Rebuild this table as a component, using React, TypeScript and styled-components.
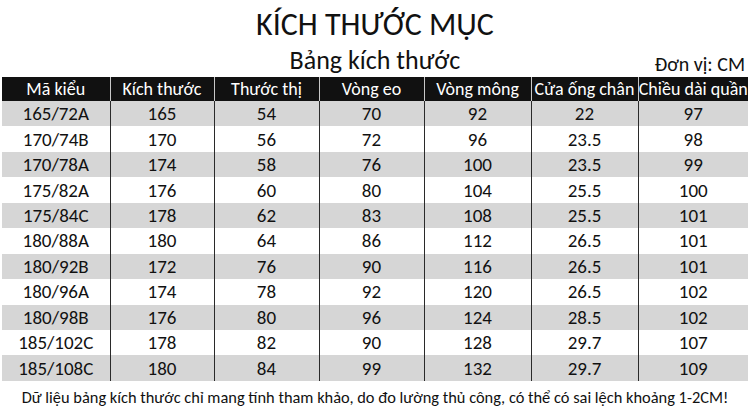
import React from 'react';
import styled, { createGlobalStyle } from 'styled-components';

const GlobalStyle = createGlobalStyle`
  html, body {
    margin: 0;
    padding: 0;
    background: #ffffff;
  }
  body {
    font-family: Carlito, "Open Sans", "Liberation Sans", sans-serif;
    color: #111111;
  }
`;

const Page = styled.div`
  width: 750px;
  height: 409px;
  overflow: hidden;
  display: flex;
  flex-direction: column;
`;

const Title = styled.h1`
  margin: 5px 0 0 0;
  font-size: 32px;
  line-height: 40px;
  font-weight: 400;
  text-align: center;
`;

const SubRow = styled.div`
  display: grid;
  grid-template-columns: 1fr auto 1fr;
  height: 30px;
  margin-bottom: 2px;
`;

const Subtitle = styled.h2`
  grid-column: 2;
  margin: 0;
  font-size: 26px;
  line-height: 30px;
  font-weight: 400;
`;

const Unit = styled.span`
  grid-column: 3;
  justify-self: end;
  align-self: end;
  margin-bottom: 1px;
  padding-right: 5px;
  font-size: 20px;
  line-height: 20px;
`;

const Table = styled.table`
  margin: 0 2px;
  width: 746px;
  border-collapse: collapse;
  table-layout: fixed;
`;

const HeadCell = styled.th`
  height: 24px;
  padding: 0;
  background: #111111;
  color: #ffffff;
  font-size: 18px;
  font-weight: 400;
  line-height: 24px;
  text-align: center;
  white-space: nowrap;
  border-left: 1px solid #c8c8c8;

  &:first-child {
    border-left: none;
  }
`;

const Row = styled.tr<{ $shade: boolean }>`
  height: 25.45px;
  background: ${p => (p.$shade ? '#d6d6d6' : '#ffffff')};
`;

const Cell = styled.td`
  padding: 0;
  font-size: 19px;
  line-height: 25px;
  text-align: center;
  white-space: nowrap;
  border-left: 1px solid #2a2a2a;

  &:first-child {
    border-left: none;
  }
`;

const Note = styled.p`
  margin: 6px 0 0 0;
  font-size: 16.4px;
  line-height: 20px;
  text-align: center;
`;

const columns = [
  { label: 'Mã kiểu', width: 108 },
  { label: 'Kích thước', width: 104 },
  { label: 'Thước thị', width: 105 },
  { label: 'Vòng eo', width: 105 },
  { label: 'Vòng mông', width: 107 },
  { label: 'Cửa ống chân', width: 107 },
  { label: 'Chiều dài quần', width: 110 },
];

const rows: (string | number)[][] = [
  ['165/72A', 165, 54, 70, 92, '22', 97],
  ['170/74B', 170, 56, 72, 96, '23.5', 98],
  ['170/78A', 174, 58, 76, 100, '23.5', 99],
  ['175/82A', 176, 60, 80, 104, '25.5', 100],
  ['175/84C', 178, 62, 83, 108, '25.5', 101],
  ['180/88A', 180, 64, 86, 112, '26.5', 101],
  ['180/92B', 172, 76, 90, 116, '26.5', 101],
  ['180/96A', 174, 78, 92, 120, '26.5', 102],
  ['180/98B', 176, 80, 96, 124, '28.5', 102],
  ['185/102C', 178, 82, 90, 128, '29.7', 107],
  ['185/108C', 180, 84, 99, 132, '29.7', 109],
];

export default function App() {
  return (
    <>
      <GlobalStyle />
      <Page>
        <Title>KÍCH THƯỚC MỤC</Title>
        <SubRow>
          <Subtitle>Bảng kích thước</Subtitle>
          <Unit>Đơn vị: CM</Unit>
        </SubRow>
        <Table>
          <colgroup>
            {columns.map(c => (
              <col key={c.label} style={{ width: c.width }} />
            ))}
          </colgroup>
          <thead>
            <tr>
              {columns.map(c => (
                <HeadCell key={c.label}>{c.label}</HeadCell>
              ))}
            </tr>
          </thead>
          <tbody>
            {rows.map((r, i) => (
              <Row key={r[0]} $shade={i % 2 === 0}>
                {r.map((v, j) => (
                  <Cell key={j}>{v}</Cell>
                ))}
              </Row>
            ))}
          </tbody>
        </Table>
        <Note>
          Dữ liệu bảng kích thước chỉ mang tính tham khảo, do đo lường thủ công, có thể có sai lệch khoảng 1-2CM!
        </Note>
      </Page>
    </>
  );
}
